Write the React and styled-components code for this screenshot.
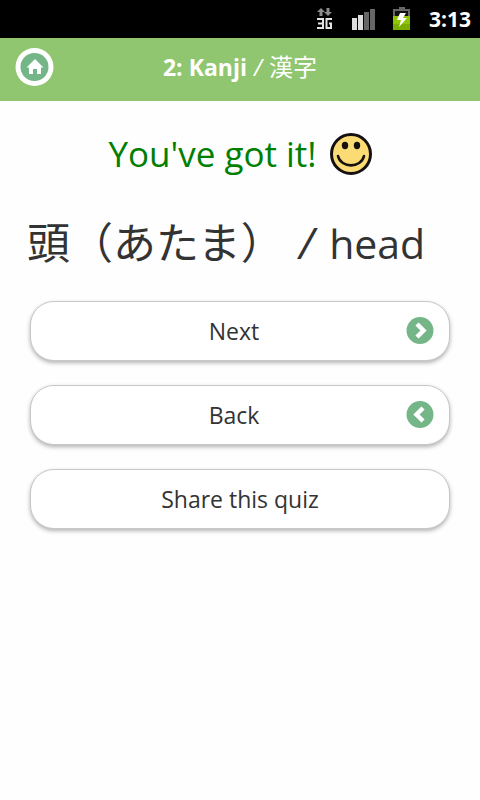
import React from "react";
import styled, { createGlobalStyle } from "styled-components";

const GlobalStyle = createGlobalStyle`
  *, *::before, *::after { box-sizing: border-box; }
  body {
    margin: 0;
    background: #fefefe;
    color: #333;
    font-family: "Open Sans", "Noto Sans CJK JP", sans-serif;
  }
`;

const StatusBar = styled.div`
  display: flex;
  align-items: center;
  justify-content: flex-end;
  height: 38px;
  padding: 0 9px 0 16px;
  background: #000;
  color: #fff;
`;

const StatusIcon = styled.svg`
  display: block;
  flex: none;
  margin-right: ${(p) => p.$gap}px;
`;

const Clock = styled.time`
  font-size: 21px;
  font-weight: 700;
  line-height: 38px;
`;

const Header = styled.header`
  display: grid;
  grid-template-columns: 40px 1fr 40px;
  align-items: center;
  height: 63px;
  padding: 0 14px 6px;
  background: #8fc66f;
  color: #fff;
`;

const HomeLink = styled.a`
  display: block;
  width: 40px;
  height: 40px;
`;

const Title = styled.h1`
  margin: 0;
  font-size: 23px;
  font-weight: 700;
  line-height: 32px;
  text-align: center;
  white-space: nowrap;
`;

const Slash = styled.span`
  margin: 0 ${(p) => p.$space}px;
  font-style: italic;
  font-weight: 400;
`;

const Japanese = styled.span`
  font-family: "Noto Sans CJK JP", sans-serif;
  font-size: 24px;
  font-weight: 400;
`;

const Content = styled.main`
  padding: 28px 30px;
`;

const Result = styled.p`
  display: flex;
  align-items: center;
  justify-content: center;
  gap: 13px;
  margin: 0;
  color: #008000;
  font-size: 35px;
  line-height: 50px;
`;

const Answer = styled.h2`
  margin: 32px -3px 26px;
  font-size: 43px;
  font-weight: 400;
  line-height: 64px;
  white-space: nowrap;
`;

const English = styled.span`
  font-size: 41px;
`;

const Actions = styled.nav`
  display: grid;
  gap: 24px;
`;

const ActionButton = styled.button`
  display: grid;
  grid-template-columns: ${(p) => (p.$withIcon ? "16px 1fr 28px" : "1fr")};
  align-items: center;
  width: 100%;
  height: 60px;
  padding: 0 15px;
  border: 1px solid #c8c8c8;
  border-radius: 24px;
  background: #fff;
  box-shadow: 0 2px 4px rgba(0, 0, 0, 0.3);
  color: #333;
  font: inherit;
  font-size: 23px;
  line-height: 32px;
  cursor: pointer;
`;

const ActionLabel = styled.span`
  grid-column: ${(p) => (p.$withIcon ? 2 : 1)};
`;

const ActionIcon = styled.svg`
  display: block;
`;

function NetworkIcon() {
  return (
    <StatusIcon $gap={19} width="16" height="22" viewBox="0 0 16 22" aria-label="3G" role="img">
      <path d="M4 0l4 4H5.500v4h-3V4H0zM9.500 0h3v4H15l-4 4-4-4h2.500z" fill="#8b8b8b" />
      <path d="M0 11h6v9H0M1 15.500h5M15 11H9.500v9H14v-4.500h-2" fill="none" stroke="#e4e4e4" strokeWidth="2" />
    </StatusIcon>
  );
}

function SignalIcon() {
  return (
    <StatusIcon $gap={17} width="24" height="22" viewBox="0 0 24 22" aria-label="Signal" role="img">
      <path d="M0 10h5v12H0zM6 7h5v15H6z" fill="#dedede" />
      <path d="M12 4h5v18h-5zM18 1h5v21h-5z" fill="#666" />
    </StatusIcon>
  );
}

function BatteryIcon() {
  return (
    <StatusIcon $gap={18} width="18" height="24" viewBox="0 0 18 24" aria-label="Charging" role="img">
      <path d="M6 0h6v2h5v21H0V2h6z" fill="#666" />
      <path d="M2 4h13v5H2z" fill="#111" />
      <path d="M0 9h17v14H0z" fill="#8fc400" />
      <path d="M0 17h17v6H0z" fill="#79ad00" />
      <path d="M7 6h6l-3 5h4l-8 9 2-7H4z" fill="#fff" />
    </StatusIcon>
  );
}

function HomeIcon() {
  return (
    <svg width="40" height="40" viewBox="0 0 40 40" aria-hidden="true">
      <circle cx="20.500" cy="20" r="19" fill="#fff" />
      <circle cx="20.500" cy="20" r="14" fill="#74b687" />
      <path d="m21 12 8.500 8.500H27V27h-4v-5h-4v5h-4v-6.500h-2.500z" fill="#fff" />
    </svg>
  );
}

function SmileIcon() {
  return (
    <svg width="42" height="42" viewBox="0 0 42 42" aria-hidden="true">
      <circle cx="21" cy="21" r="19.500" fill="#fbdc74" stroke="#161010" strokeWidth="3" />
      <ellipse cx="15" cy="12.500" rx="3.200" ry="3.700" fill="#161010" />
      <ellipse cx="27" cy="12.500" rx="3.200" ry="3.700" fill="#161010" />
      <path d="M8 23c3 12.500 23 12.500 26 0" fill="none" stroke="#161010" strokeWidth="2.600" strokeLinecap="round" />
    </svg>
  );
}

function ArrowIcon({ direction }) {
  const d = direction === "right" ? "m11 7 6.500 6.500L11 20" : "m17 7-6.500 6.500L17 20";
  return (
    <ActionIcon width="28" height="28" viewBox="0 0 28 28" aria-hidden="true">
      <circle cx="14" cy="13.500" r="13.500" fill="#74b687" />
      <path d={d} fill="none" stroke="#fff" strokeWidth="4.500" />
    </ActionIcon>
  );
}

const actions = [
  { label: "Next", arrow: "right" },
  { label: "Back", arrow: "left" },
  { label: "Share this quiz" },
];

export default function App() {
  return (
    <>
      <GlobalStyle />
      <StatusBar>
        <NetworkIcon />
        <SignalIcon />
        <BatteryIcon />
        <Clock>3:13</Clock>
      </StatusBar>
      <Header>
        <HomeLink href="#home" aria-label="Home">
          <HomeIcon />
        </HomeLink>
        <Title>
          2: Kanji <Slash $space={1}>/</Slash> <Japanese lang="ja">漢字</Japanese>
        </Title>
      </Header>
      <Content>
        <Result>
          You've got it!
          <SmileIcon />
        </Result>
        <Answer lang="ja">
          頭（あたま） <Slash $space={4}>/</Slash> <English lang="en">head</English>
        </Answer>
        <Actions>
          {actions.map(({ label, arrow }) => (
            <ActionButton key={label} type="button" $withIcon={Boolean(arrow)}>
              <ActionLabel $withIcon={Boolean(arrow)}>{label}</ActionLabel>
              {arrow && <ArrowIcon direction={arrow} />}
            </ActionButton>
          ))}
        </Actions>
      </Content>
    </>
  );
}
